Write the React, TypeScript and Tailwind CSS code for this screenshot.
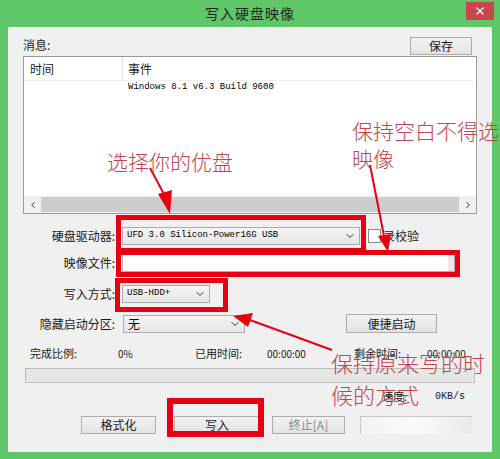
import { ChevronDown, ChevronLeft, ChevronRight, X } from "lucide-react";

const ui = { fontFamily: '"Noto Sans CJK SC", "Noto Sans", sans-serif' };
const mono = { fontFamily: '"Liberation Mono", "DejaVu Sans Mono", monospace' };

const Btn = ({ label, className }: { label: string; className: string }) => (
    <div
        className={`flex items-center justify-center border border-[#acacac] bg-gradient-to-b from-[#f2f2f2] to-[#e3e3e3] text-[12px] text-[#1a1a1a] ${className}`}
    >
        {label}
    </div>
);

const Select = ({ value, className, isMono }: { value: string; className: string; isMono?: boolean }) => (
    <div
        className={`flex items-center justify-between border border-[#acacac] bg-gradient-to-b from-[#f4f4f4] to-[#e6e6e6] pl-[4px] pr-[3px] ${className}`}
    >
        <span className={isMono ? "text-[9px] text-[#000]" : "text-[12px] text-[#111]"} style={isMono ? mono : ui}>
            {value}
        </span>
        <ChevronDown size={12} strokeWidth={2} className="text-[#333]" />
    </div>
);

const App = () => {
    return (
        <div className="relative w-[500px] h-[459px] bg-[#60c769] flex flex-col px-[8px] pb-[7px] overflow-hidden" style={ui}>

            {/* title bar */}
            <div className="relative h-[27px] flex items-center justify-center shrink-0">
                <span className="text-[14px] text-[#222] tracking-[1px]">写入硬盘映像</span>
                <div className="absolute right-[-2px] top-[2px] w-[28px] h-[18px] bg-[#c9474c] flex items-center justify-center">
                    <X size={12} strokeWidth={2.5} className="text-white" />
                </div>
            </div>

            {/* client area */}
            <div className="flex-1 bg-[#f0f0f0] flex flex-col px-[15px] text-[12px] text-[#1a1a1a]">

                {/* messages header */}
                <div className="flex items-end justify-between h-[29px] pb-[1px]">
                    <span className="pb-[1px]">消息:</span>
                    <Btn label="保存" className="w-[62px] h-[18px] mr-[5px]" />
                </div>

                {/* list box */}
                <div className="h-[158px] border border-[#9a9a9a] bg-white flex flex-col">
                    <div className="flex h-[24px] items-center border-b border-[#f0f0f0]">
                        <div className="w-[99px] pl-[6px] h-full flex items-center border-r border-[#e5e5e5]">时间</div>
                        <div className="pl-[5px]">事件</div>
                    </div>
                    <div className="flex h-[14px] items-center">
                        <div className="w-[99px]" />
                        <div className="pl-[5px] text-[9px] text-black" style={mono}>Windows 8.1 v6.3 Build 9600</div>
                    </div>
                    <div className="flex-1" />
                    <div className="h-[17px] flex items-center bg-[#f0f0f0]">
                        <div className="w-[17px] flex justify-center"><ChevronLeft size={10} strokeWidth={2.5} className="text-[#555]" /></div>
                        <div className="flex-1 h-[15px] bg-[#cdcdcd]" />
                        <div className="w-[17px] flex justify-center"><ChevronRight size={10} strokeWidth={2.5} className="text-[#555]" /></div>
                    </div>
                </div>

                {/* form rows */}
                <div className="flex items-center mt-[13px] h-[18px]">
                    <span className="w-[93px] text-right pr-[1px]">硬盘驱动器:</span>
                    <Select value="UFD 3.0 Silicon-Power16G USB" isMono className="ml-[6px] w-[238px] h-[18px]" />
                    <div className="ml-[8px] w-[13px] h-[14px] border border-[#8a8a8a] bg-white" />
                    <span className="ml-[2px]">录校验</span>
                </div>

                <div className="flex items-center mt-[9px] h-[18px]">
                    <span className="w-[93px] text-right pr-[1px]">映像文件:</span>
                    <div className="ml-[6px] w-[333px] h-[18px] border border-[#acacac] bg-white flex justify-end">
                        <div className="w-[6px] h-full bg-[#e8e8e8]" />
                    </div>
                </div>

                <div className="flex items-center mt-[13px] h-[18px]">
                    <span className="w-[93px] text-right pr-[1px]">写入方式:</span>
                    <Select value="USB-HDD+" isMono className="ml-[6px] w-[88px] h-[18px]" />
                </div>

                <div className="flex items-center mt-[11px] h-[19px]">
                    <span className="w-[93px] text-right pr-[1px]">隐藏启动分区:</span>
                    <Select value="无" className="ml-[7px] w-[122px] h-[18px]" />
                    <Btn label="便捷启动" className="ml-[101px] w-[91px] h-[19px]" />
                </div>

                {/* progress labels */}
                <div className="flex items-center mt-[13px] h-[14px] pl-[7px] text-[11px]">
                    <span className="w-[88px]">完成比例:</span>
                    <span className="w-[77px] text-[10px]">0%</span>
                    <span className="w-[72px]">已用时间:</span>
                    <span className="w-[87px] text-[10px]">00:00:00</span>
                    <span className="w-[73px]">剩余时间:</span>
                    <span className="text-[10px]">00:00:00</span>
                </div>

                <div className="mt-[8px] h-[15px] mx-[2px] border border-[#bcbcbc] bg-[#e6e6e6]" />

                <div className="flex items-center mt-[6px] h-[14px] text-[11px]">
                    <span className="ml-[359px] w-[53px]">速度:</span>
                    <span className="text-[10px]" style={mono}>0KB/s</span>
                </div>

                {/* bottom buttons */}
                <div className="flex items-center mt-[13px] h-[18px]">
                    <Btn label="格式化" className="ml-[58px] w-[75px] h-[18px]" />
                    <Btn label="写入" className="ml-[18px] w-[86px] h-[18px]" />
                    <Btn label="终止[A]" className="ml-[12px] w-[73px] h-[18px] text-[#8a8a8a]" />
                    <div className="ml-[15px] w-[112px] h-[18px] border-l border-t border-[#c8c8c8] bg-gradient-to-r from-[#f3f3f3] via-[#fafafa] to-[#e9e9e9]" />
                </div>
            </div>

            {/* annotation overlay */}
            <div className="absolute inset-0 pointer-events-none">
                <div className="absolute left-[116px] top-[215px] w-[250px] h-[38px] border-[5px] border-[#e60012]" />
                <div className="absolute left-[116px] top-[250px] w-[344px] h-[27px] border-[5px] border-[#e60012]" />
                <div className="absolute left-[115px] top-[278px] w-[113px] h-[34px] border-[5px] border-[#e60012]" />
                <div className="absolute left-[167px] top-[398px] w-[97px] h-[39px] border-[6px] border-[#e60012]" />

                <svg className="absolute inset-0" width="500" height="459" viewBox="0 0 500 459">
                    <line x1="150" y1="168" x2="165" y2="196" stroke="#e60012" strokeWidth="2" />
                    <polygon points="158,194 172,190 170,214" fill="#e60012" />
                    <line x1="370" y1="165" x2="384" y2="236" stroke="#e60012" strokeWidth="2" />
                    <polygon points="378,236 391,234 388,252" fill="#e60012" />
                    <line x1="332" y1="350" x2="250" y2="320" stroke="#e60012" strokeWidth="2" />
                    <polygon points="253,313 248,327 233,316" fill="#e60012" />
                </svg>

                <div className="absolute left-[107px] top-[147px] text-[21px] leading-[28px] text-[#c2454d] font-light">选择你的优盘</div>
                <div className="absolute left-[352px] top-[116px] text-[21px] leading-[28px] text-[#c2454d] font-light whitespace-nowrap">
                    保持空白不得选<br />映像
                </div>
                <div className="absolute left-[331px] top-[346px] text-[22px] leading-[32px] text-[#c2454d] font-light whitespace-nowrap">
                    保持原来写的时<br />候的方式
                </div>
            </div>
        </div>
    );
};

export default App;
